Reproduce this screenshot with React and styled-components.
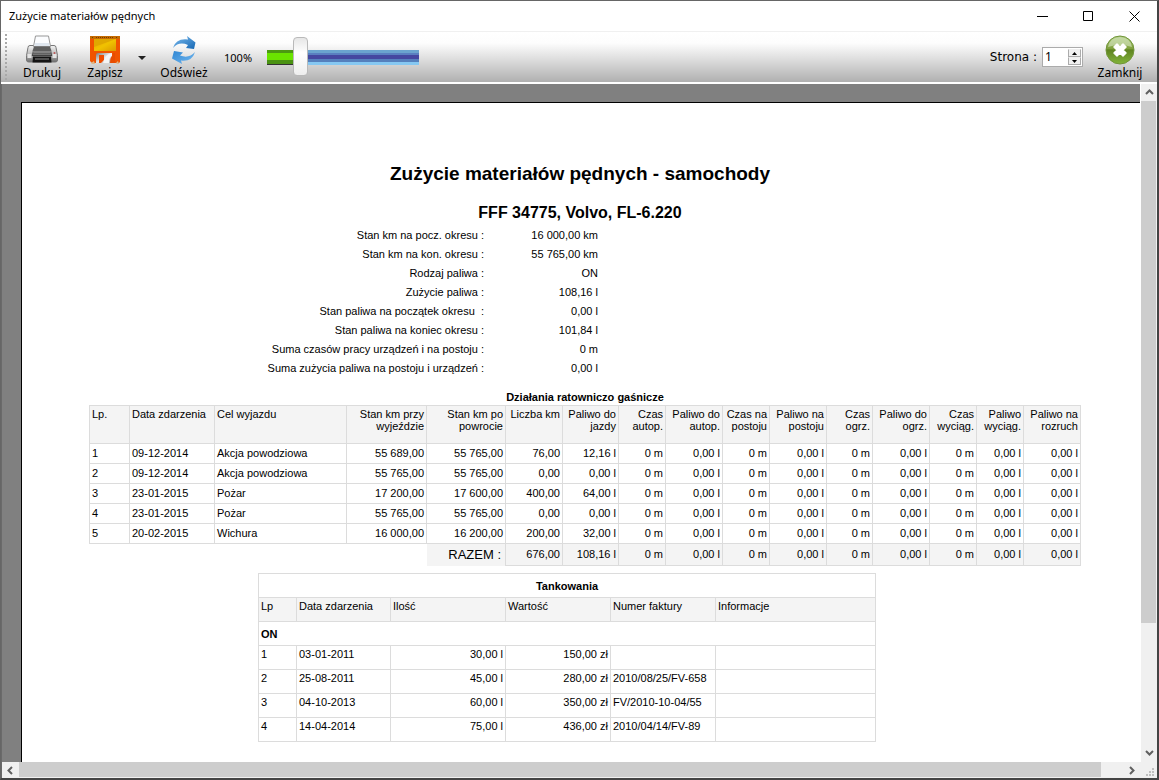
import React, { useState } from 'react'
import styled, { createGlobalStyle } from 'styled-components'

const info = [
  ['Stan km na pocz. okresu :', '16 000,00 km'],
  ['Stan km na kon. okresu :', '55 765,00 km'],
  ['Rodzaj paliwa :', 'ON'],
  ['Zużycie paliwa :', '108,16 l'],
  ['Stan paliwa na początek okresu  :', '0,00 l'],
  ['Stan paliwa na koniec okresu :', '101,84 l'],
  ['Suma czasów pracy urządzeń i na postoju :', '0 m'],
  ['Suma zużycia paliwa na postoju i urządzeń :', '0,00 l'],
];

const tripColumns = [
  ['Lp.', 41],
  ['Data zdarzenia', 85],
  ['Cel wyjazdu', 132],
  ['Stan km przy wyjeździe', 80],
  ['Stan km po powrocie', 79],
  ['Liczba km', 57],
  ['Paliwo do jazdy', 56],
  ['Czas autop.', 47],
  ['Paliwo do autop.', 57],
  ['Czas na postoju', 47],
  ['Paliwo na postoju', 57],
  ['Czas ogrz.', 46],
  ['Paliwo do ogrz.', 57],
  ['Czas wyciąg.', 47],
  ['Paliwo wyciąg.', 47],
  ['Paliwo na rozruch', 57],
];

// time / fuel pairs that are empty for every trip
const rest = ['0 m', '0,00 l', '0 m', '0,00 l', '0 m', '0,00 l', '0 m', '0,00 l', '0,00 l'];

const trips = [
  ['1', '09-12-2014', 'Akcja powodziowa', '55 689,00', '55 765,00', '76,00', '12,16 l', ...rest],
  ['2', '09-12-2014', 'Akcja powodziowa', '55 765,00', '55 765,00', '0,00', '0,00 l', ...rest],
  ['3', '23-01-2015', 'Pożar', '17 200,00', '17 600,00', '400,00', '64,00 l', ...rest],
  ['4', '23-01-2015', 'Pożar', '55 765,00', '55 765,00', '0,00', '0,00 l', ...rest],
  ['5', '20-02-2015', 'Wichura', '16 000,00', '16 200,00', '200,00', '32,00 l', ...rest],
];

const totals = ['676,00', '108,16 l', ...rest];

const fuelColumns = [
  ['Lp', 39],
  ['Data zdarzenia', 94],
  ['Ilość', 115],
  ['Wartość', 105],
  ['Numer faktury', 105],
  ['Informacje', 160],
];

const fuelings = [
  ['1', '03-01-2011', '30,00 l', '150,00 zł', '', ''],
  ['2', '25-08-2011', '45,00 l', '280,00 zł', '2010/08/25/FV-658', ''],
  ['3', '04-10-2013', '60,00 l', '350,00 zł', 'FV/2010-10-04/55', ''],
  ['4', '14-04-2014', '75,00 l', '436,00 zł', '2010/04/14/FV-89', ''],
];

const PrinterIcon = () => (
  <svg width="32" height="30" viewBox="0 0 32 30" aria-hidden="true">
    <defs>
      <linearGradient id="prBody" x1="0" y1="0" x2="0" y2="1">
        <stop offset="0" stopColor="#f4f4f4" />
        <stop offset="0.5" stopColor="#bdbdbd" />
        <stop offset="1" stopColor="#6e6e6e" />
      </linearGradient>
      <linearGradient id="prLid" x1="0" y1="0" x2="0" y2="1">
        <stop offset="0" stopColor="#8b8b8b" />
        <stop offset="1" stopColor="#3a3a3a" />
      </linearGradient>
    </defs>
    <path d="M2 12.500Q2 10.500 4 10.500h24q2 0 2 2l1.500 8v4.500q0 2-2 2h-27q-2 0-2-2v-4.500z" fill="url(#prBody)" stroke="#777" />
    <path d="M9.500 1h13l2 10.500h-17z" fill="#fbfcfe" stroke="#979797" />
    <path d="M9 8h14l.5 3h-15z" fill="#dfe6ee" />
    <path d="M8 11.500h16l1.500 4.500h-19z" fill="#5e5e5e" />
    <path d="M6.500 16h19l1 5h-21z" fill="url(#prLid)" />
    <path d="M8 17.500h16M7 19.500h18" stroke="#8d8d8d" strokeWidth="0.600" />
    <path d="M7 21.500h18l.5 6h-19z" fill="#141414" />
    <path d="M9 24h14" stroke="#8a8a8a" />
    <path d="M1.500 19h4v4h-4zM26.500 19h4v4h-4z" fill="#e4e4e4" />
    <circle cx="28.500" cy="18" r="1" fill="#b55" />
  </svg>
);

const DisketteIcon = () => (
  <svg width="32" height="30" viewBox="0 0 32 30" aria-hidden="true">
    <defs>
      <linearGradient id="dkLabel" x1="0" y1="0" x2="1" y2="1">
        <stop offset="0" stopColor="#e9a000" />
        <stop offset="0.500" stopColor="#f0c200" />
        <stop offset="1" stopColor="#dc9a00" />
      </linearGradient>
      <linearGradient id="dkMetal" x1="0" y1="0" x2="1" y2="1">
        <stop offset="0" stopColor="#7d7d7d" />
        <stop offset="0.500" stopColor="#e6e6e6" />
        <stop offset="1" stopColor="#a5a5a5" />
      </linearGradient>
    </defs>
    <path d="M1 1h30v26l-1 1H3l-2-2z" fill="#f05400" />
    <path d="M1 1h30v3H1z" fill="#c66a00" />
    <path d="M5 4h22v12H5z" fill="url(#dkLabel)" />
    <path d="M5 4h22L5 12z" fill="#e0a800" />
    <path d="M7 28v-8q0-2 2-2h14v10z" fill="url(#dkMetal)" />
    <path d="M10 20h5v5l-3 3h-2z" fill="#ee4c00" />
    <path d="M23 18q-7 1-9 10h6q0-6 3-7z" fill="#f4f4f4" />
    <path d="M24 18h2v10h-5q0-6 3-8z" fill="#e84d00" />
    <path d="M2 28l3-2 1 3H3zM27 28l2-2 1 3h-2z" fill="#dcb98c" />
    <path d="M3 2.500h2M7 2.500h18M27 2.500h2" stroke="#6b4300" strokeDasharray="1 1" />
  </svg>
);

const RefreshIcon = () => (
  <svg width="26" height="30" viewBox="0 0 26 30" aria-hidden="true">
    <defs>
      <linearGradient id="rfBlue" x1="0" y1="0" x2="1" y2="1">
        <stop offset="0" stopColor="#7cbdf0" />
        <stop offset="1" stopColor="#1667b3" />
      </linearGradient>
      <linearGradient id="rfLight" x1="0" y1="0" x2="1" y2="1">
        <stop offset="0" stopColor="#2f86d3" />
        <stop offset="1" stopColor="#74b9f0" />
      </linearGradient>
    </defs>
    <path d="M2 13Q5 3 17 4.500L16 1l8.500 6.500L23 14l-8-1 2-3Q8 6 2 13z" fill="url(#rfBlue)" />
    <path d="M24 17Q21 27 10 25.500l1 3.500L1 23.500 3 16l9 1.500-3 3Q18 24 24 17z" fill="url(#rfLight)" />
  </svg>
);

const CloseIcon = () => (
  <svg width="30" height="30" viewBox="0 0 30 30" aria-hidden="true">
    <defs>
      <linearGradient id="clGreen" x1="0" y1="0" x2="0" y2="1">
        <stop offset="0" stopColor="#a8c877" />
        <stop offset="0.450" stopColor="#7fa03c" />
        <stop offset="0.500" stopColor="#5f8420" />
        <stop offset="1" stopColor="#82b53a" />
      </linearGradient>
    </defs>
    <circle cx="15" cy="15" r="14" fill="url(#clGreen)" stroke="#71953a" />
    <path d="M3 12Q5 2 15 2t12 10Q15 8 3 12z" fill="#dbe8c6" opacity="0.600" />
    <path d="M9 12l3-3 3 3 3-3 3 3-3 3 3 3-3 3-3-3-3 3-3-3 3-3z" fill="#fff" stroke="#fff" strokeWidth="1.500" strokeLinejoin="round" />
  </svg>
);

const Chevron = ({ d }) => (
  <svg width="9" height="9" viewBox="0 0 9 9" aria-hidden="true">
    <path d={d} fill="none" stroke="#606060" strokeWidth="2" />
  </svg>
);

const App = () => {
  const [zoom, setZoom] = useState(100);
  const [page, setPage] = useState(1);
  const filled = ((zoom - 5) / 495) * 100;

  return (
    <>
      <GlobalStyle />
      <Window>
        <TitleBar>
          <WindowTitle>Zużycie materiałów pędnych</WindowTitle>
          <CaptionButton aria-label="Minimalizuj">
            <svg width="11" height="11"><path d="M0 5.500h11" stroke="#000" /></svg>
          </CaptionButton>
          <CaptionButton aria-label="Maksymalizuj">
            <svg width="11" height="11"><path d="M.5.5h9v9h-9z" fill="none" stroke="#000" /></svg>
          </CaptionButton>
          <CaptionButton aria-label="Zamknij okno">
            <svg width="11" height="11"><path d="M.5.500l10 10M10.500.500l-10 10" stroke="#000" /></svg>
          </CaptionButton>
        </TitleBar>

        <Toolbar>
          <Grip />
          <ToolButton><PrinterIcon />Drukuj</ToolButton>
          <ToolButton><DisketteIcon />Zapisz</ToolButton>
          <DropButton aria-label="Opcje zapisu">
            <svg width="8" height="4"><path d="M0 0h8L4 4z" fill="#222" /></svg>
          </DropButton>
          <ToolButton><RefreshIcon />Odśwież</ToolButton>
          <ZoomLabel htmlFor="zoom">{zoom}%</ZoomLabel>
          <ZoomSlider
            id="zoom"
            type="range"
            min="5"
            max="500"
            value={zoom}
            style={{ '--filled': `${filled}%` }}
            onChange={(e) => setZoom(Number(e.target.value))}
          />
          <Spacer />
          <PageLabel htmlFor="page">Strona :</PageLabel>
          <Spinner>
            <PageInput
              id="page"
              type="text"
              value={page}
              onChange={(e) => setPage(Number(e.target.value) || 1)}
            />
            <SpinButtons>
              <SpinButton aria-label="Następna strona" onClick={() => setPage(page + 1)}>
                <svg width="5" height="3"><path d="M0 3h5L2.500 0z" /></svg>
              </SpinButton>
              <SpinButton aria-label="Poprzednia strona" onClick={() => setPage(Math.max(1, page - 1))}>
                <svg width="5" height="3"><path d="M0 0h5L2.500 3z" /></svg>
              </SpinButton>
            </SpinButtons>
          </Spinner>
          <ToolButton><CloseIcon />Zamknij</ToolButton>
        </Toolbar>

        <Viewer>
          <Canvas>
            <Paper>
              <Title>Zużycie materiałów pędnych - samochody</Title>
              <Vehicle>FFF 34775, Volvo, FL-6.220</Vehicle>
              <Info>
                {info.map(([label, value]) => (
                  <React.Fragment key={label}>
                    <dt>{label}</dt>
                    <dd>{value}</dd>
                  </React.Fragment>
                ))}
              </Info>

              <Table>
                <caption>Działania ratowniczo gaśnicze</caption>
                <colgroup>
                  {tripColumns.map(([name, width]) => <col key={name} width={width} />)}
                </colgroup>
                <thead>
                  <Row $height={39}>
                    {tripColumns.map(([name], i) => (
                      <HeadCell key={name} $right={i > 2} $topLine>{name}</HeadCell>
                    ))}
                  </Row>
                </thead>
                <tbody>
                  {trips.map((trip) => (
                    <Row key={trip[0]} $height={20}>
                      {trip.map((value, i) => <Cell key={i} $right={i > 2}>{value}</Cell>)}
                    </Row>
                  ))}
                </tbody>
                <tfoot>
                  <Row $height={22}>
                    <EmptyCell colSpan={4} />
                    <TotalLabel scope="row">RAZEM :</TotalLabel>
                    {totals.map((value, i) => <Cell key={i} $right $shaded>{value}</Cell>)}
                  </Row>
                </tfoot>
              </Table>

              <FuelTable>
                <colgroup>
                  {fuelColumns.map(([name, width]) => <col key={name} width={width} />)}
                </colgroup>
                <thead>
                  <Row $height={25}>
                    <GroupCell colSpan={6} $center $topLine>Tankowania</GroupCell>
                  </Row>
                  <Row $height={24}>
                    {fuelColumns.map(([name]) => <HeadCell key={name}>{name}</HeadCell>)}
                  </Row>
                </thead>
                <tbody>
                  <Row $height={24}>
                    <GroupCell colSpan={6}>ON</GroupCell>
                  </Row>
                  {fuelings.map((fueling) => (
                    <Row key={fueling[0]} $height={24}>
                      {fueling.map((value, i) => (
                        <Cell key={i} $top $right={i === 2 || i === 3}>{value}</Cell>
                      ))}
                    </Row>
                  ))}
                </tbody>
              </FuelTable>
            </Paper>
          </Canvas>
          <ScrollBar $vertical>
            <ScrollButton aria-label="W górę"><Chevron d="M1 6l3.500-3.500L8 6" /></ScrollButton>
            <ScrollTrack $vertical><ScrollThumb $size="81%" $vertical /></ScrollTrack>
            <ScrollButton aria-label="W dół"><Chevron d="M1 2l3.500 3.500L8 2" /></ScrollButton>
          </ScrollBar>
          <ScrollBar>
            <ScrollButton aria-label="W lewo"><Chevron d="M6 1L2.500 4.500 6 8" /></ScrollButton>
            <ScrollTrack><ScrollThumb $size="98%" /></ScrollTrack>
            <ScrollButton aria-label="W prawo"><Chevron d="M3 1l3.500 3.500L3 8" /></ScrollButton>
          </ScrollBar>
          <SizeGrip>
            <svg width="8" height="8" aria-hidden="true">
              <path d="M6 0h2v2h-2zM3 3h2v2h-2zM6 3h2v2h-2zM0 6h2v2h-2zM3 6h2v2h-2zM6 6h2v2h-2z" fill="#bfbfbf" />
            </svg>
          </SizeGrip>
        </Viewer>
      </Window>
    </>
  )
}

export default App;

const GlobalStyle = createGlobalStyle`
    *{
        box-sizing: border-box;
    }
    body{
        margin: 0;
        color: #000;
        font-family: "Noto Sans", "Open Sans", sans-serif;
        font-size: 12px;
    }
    button{
        padding: 0;
        border: none;
        background: none;
        color: inherit;
        font: inherit;
    }
    svg{
        display: block;
    }
`;

const Window = styled.div`
    display: flex;
    flex-direction: column;
    height: 100vh;
    border: 1px solid #666;
    border-right: 2px solid #444;
    border-bottom: 2px solid #444;
    background-color: #fff;
    overflow: hidden;
`;

const TitleBar = styled.header`
    display: flex;
    flex: none;
    align-items: center;
    height: 30px;
    padding-left: 8px;
`;

const WindowTitle = styled.div`
    flex: 1;
    font-size: 11px;
    line-height: 16px;
`;

const CaptionButton = styled.button`
    display: flex;
    align-items: center;
    justify-content: center;
    width: 46px;
    height: 28px;
    &:hover{
        background-color: #e5e5e5;
    }
`;

const Toolbar = styled.div`
    display: flex;
    flex: none;
    align-items: center;
    height: 53px;
    padding-right: 15px;
    border-top: 1px solid #f0f0f0;
    border-bottom: 2px solid #fff;
    background: linear-gradient(#fff 0, #fdfdfd 22%, #dcdcdc 56%, #b0b0b0 100%);
`;

const Grip = styled.div`
    width: 2px;
    height: 46px;
    margin: 0 9px 0 4px;
    background: repeating-linear-gradient(#a8a8a8 0 2px, transparent 2px 4px);
`;

const ToolButton = styled.button`
    display: flex;
    flex-direction: column;
    align-items: center;
    width: 52px;
    margin: 2px 11px 0 0;
    line-height: 16px;
    &:last-child{
        width: 44px;
        margin: 2px 0 0 15px;
    }
`;

const DropButton = styled.button`
    display: flex;
    align-items: center;
    justify-content: center;
    width: 14px;
    height: 44px;
    margin: 2px 9px 0 -7px;
`;

const ZoomLabel = styled.label`
    width: 43px;
    margin-left: 3px;
    font-size: 11px;
`;

const ZoomSlider = styled.input`
    appearance: none;
    width: 152px;
    height: 40px;
    margin: 0;
    background: none;
    &::-webkit-slider-runnable-track{
        height: 15px;
        background:
            linear-gradient(#4c9a12 0 3px, #6ae400 3px 10px, #4a9212 10px 14px, #333 14px) 0 0 / var(--filled) 100% no-repeat,
            linear-gradient(#6ba4cf 0 3px, #5a7fc0 3px 5px, #4547a0 5px 9px, #5580bd 9px 12px, #86c8f2 12px);
    }
    &::-webkit-slider-thumb{
        appearance: none;
        width: 15px;
        height: 39px;
        margin-top: -13px;
        border: 1px solid #b9b9b9;
        border-radius: 4px;
        background: linear-gradient(#e6e6e6, #fff 40%, #eee);
    }
`;

const Spacer = styled.div`
    flex: 1;
`;

const PageLabel = styled.label`
    margin-right: 5px;
    font-family: "DejaVu Sans", sans-serif;
`;

const Spinner = styled.div`
    display: flex;
    width: 41px;
    height: 20px;
    border: 1px solid #ababab;
    background-color: #fff;
`;

const PageInput = styled.input`
    flex: 1;
    min-width: 0;
    padding: 0 0 2px 2px;
    border: none;
    background: none;
    font: inherit;
`;

const SpinButtons = styled.div`
    display: flex;
    flex-direction: column;
    width: 15px;
    padding: 1px;
`;

const SpinButton = styled.button`
    display: flex;
    flex: 1;
    align-items: center;
    justify-content: center;
    border: 1px solid #ababab;
    border-top-color: #eee;
    background-color: #f0f0f0;
`;

const Viewer = styled.div`
    display: grid;
    flex: 1;
    grid-template-columns: minmax(0, 1fr) 17px;
    grid-template-rows: minmax(0, 1fr) 16px;
    min-height: 0;
    border-left: 1px solid #6a6a6a;
`;

const Canvas = styled.main`
    display: flex;
    padding: 18px 0 0 19px;
    background-color: #808080;
    overflow: hidden;
`;

const Paper = styled.article`
    flex: 1;
    padding: 59px 59px 20px 67px;
    border-top: 1px solid #000;
    border-left: 1px solid #000;
    background-color: #fff;
    font-family: "Liberation Sans", Arial, sans-serif;
    font-size: 11px;
`;

const Title = styled.h1`
    margin: 0;
    padding-right: 10px;
    font-size: 19px;
    line-height: 24px;
    text-align: center;
`;

const Vehicle = styled.h2`
    margin: 17px 0 3px;
    padding-right: 10px;
    font-size: 16px;
    line-height: 20px;
    text-align: center;
`;

const Info = styled.dl`
    display: grid;
    grid-template-columns: 395px 114px;
    margin: 0 0 11px;
    line-height: 19px;
    text-align: right;
    white-space: pre;
    dd{
        margin: 0;
    }
`;

const Table = styled.table`
    width: 100%;
    table-layout: fixed;
    border-collapse: separate;
    border-spacing: 0;
    line-height: 12px;
    caption{
        font-weight: 700;
        line-height: 16px;
    }
`;

const FuelTable = styled(Table)`
    width: calc(100% - 374px);
    margin: 7px 0 0 169px;
`;

const Row = styled.tr`
    height: ${({ $height }) => $height}px;
`;

const Cell = styled.td`
    padding: ${({ $top }) => ($top ? '2px 2px 0' : '0 2px 2px')};
    border-right: 1px solid #dcdcdc;
    border-bottom: 1px solid #dcdcdc;
    background-color: ${({ $shaded }) => ($shaded ? '#f4f4f4' : '#fff')};
    text-align: ${({ $right }) => ($right ? 'right' : 'left')};
    vertical-align: ${({ $top }) => ($top ? 'top' : 'middle')};
    white-space: nowrap;
    &:first-child{
        border-left: 1px solid #dcdcdc;
    }
`;

const HeadCell = styled.th`
    padding: 2px 2px 0;
    border-top: ${({ $topLine }) => ($topLine ? '1px solid #dcdcdc' : 'none')};
    border-right: 1px solid #dcdcdc;
    border-bottom: 1px solid #dcdcdc;
    background-color: #f4f4f4;
    font-weight: 400;
    text-align: ${({ $right }) => ($right ? 'right' : 'left')};
    vertical-align: top;
    &:first-child{
        border-left: 1px solid #dcdcdc;
    }
`;

const GroupCell = styled.th`
    padding: 0 2px;
    border: 1px solid #dcdcdc;
    border-top-width: ${({ $topLine }) => ($topLine ? 1 : 0)}px;
    text-align: ${({ $center }) => ($center ? 'center' : 'left')};
`;

const EmptyCell = styled.td`
    padding: 0;
`;

const TotalLabel = styled.th`
    padding: 0 4px;
    border-right: 1px solid #dcdcdc;
    background-color: #f4f4f4;
    font-size: 13px;
    font-weight: 400;
    text-align: right;
`;

const ScrollBar = styled.div`
    display: flex;
    flex-direction: ${({ $vertical }) => ($vertical ? 'column' : 'row')};
    border-left: ${({ $vertical }) => ($vertical ? '1px solid #fff' : 'none')};
    background-color: #f0f0f0;
`;

const ScrollButton = styled.button`
    display: flex;
    flex: 0 0 17px;
    align-items: center;
    justify-content: center;
`;

const ScrollTrack = styled.div`
    display: flex;
    flex: 1;
    flex-direction: ${({ $vertical }) => ($vertical ? 'column' : 'row')};
    padding: ${({ $vertical }) => ($vertical ? '0 1px 0 0' : '0 0 1px')};
`;

const ScrollThumb = styled.div`
    flex: 0 0 ${({ $size }) => $size};
    background-color: #cdcdcd;
`;

const SizeGrip = styled.div`
    display: flex;
    align-items: flex-end;
    justify-content: flex-end;
    padding: 0 3px 2px 0;
    background-color: #f0f0f0;
`;
